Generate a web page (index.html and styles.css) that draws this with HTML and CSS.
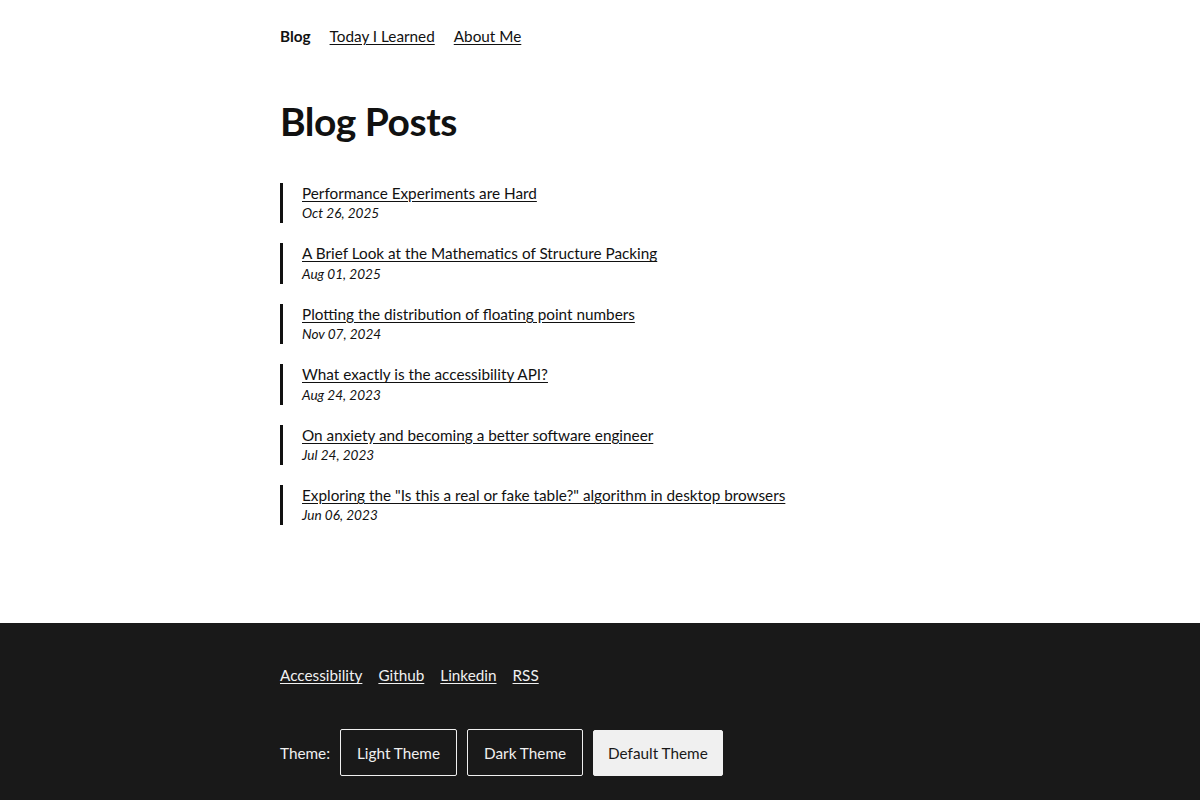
FILE: index.html
```html
<!DOCTYPE html>
<html lang="en">
<head>
<meta charset="utf-8">
<title>Blog Posts</title>
<link rel="stylesheet" href="styles.css">
</head>
<body>
<div class="page">
  <header class="wrap">
    <nav class="nav">
      <a class="nav-link current" href="#">Blog</a>
      <a class="nav-link" href="#">Today I Learned</a>
      <a class="nav-link" href="#">About Me</a>
    </nav>
  </header>
  <main class="wrap main">
    <h1 class="title">Blog Posts</h1>
    <ul class="posts">
      <li class="post"><a href="#">Performance Experiments are Hard</a><time>Oct 26, 2025</time></li>
      <li class="post"><a href="#">A Brief Look at the Mathematics of Structure Packing</a><time>Aug 01, 2025</time></li>
      <li class="post"><a href="#">Plotting the distribution of floating point numbers</a><time>Nov 07, 2024</time></li>
      <li class="post"><a href="#">What exactly is the accessibility API?</a><time>Aug 24, 2023</time></li>
      <li class="post"><a href="#">On anxiety and becoming a better software engineer</a><time>Jul 24, 2023</time></li>
      <li class="post"><a href="#">Exploring the "Is this a real or fake table?" algorithm in desktop browsers</a><time>Jun 06, 2023</time></li>
    </ul>
  </main>
  <footer class="footer">
    <div class="wrap">
      <nav class="foot-links">
        <a href="#">Accessibility</a>
        <a href="#">Github</a>
        <a href="#">Linkedin</a>
        <a href="#">RSS</a>
      </nav>
      <div class="theme">
        <span class="theme-label">Theme:</span>
        <button class="btn">Light Theme</button>
        <button class="btn">Dark Theme</button>
        <button class="btn active">Default Theme</button>
      </div>
    </div>
  </footer>
</div>
</body>
</html>
```
FILE: styles.css
```css
* { box-sizing: border-box; }
html, body { margin: 0; padding: 0; }
body {
  font-family: Lato, "Liberation Sans", sans-serif;
  color: #111;
  background: #fff;
  font-size: 15.3px;
}
a { color: inherit; text-underline-offset: 2px; }
.wrap { width: 640px; margin: 0 auto; }
.nav { display: flex; gap: 19px; padding-top: 25px; line-height: 22px; }
.nav-link.current { font-weight: 700; text-decoration: none; }
.main { padding-bottom: 98px; }
.title { font-size: 39px; font-weight: 700; margin: 49px 0 37px; line-height: 50px; letter-spacing: -0.5px; }
.posts { list-style: none; margin: 0; padding: 0; display: flex; flex-direction: column; gap: 20px; }
.post { border-left: 3px solid #111; padding-left: 19px; display: flex; flex-direction: column; line-height: 21.4px; }
.post time { font-size: 13.6px; font-style: italic; line-height: 19px; }
.footer { background: #191919; color: #f0f0f0; padding: 41px 0 40px; min-height: 177px; }
.foot-links { display: flex; gap: 16px; line-height: 22px; }
.theme { display: flex; align-items: center; gap: 10px; margin-top: 43px; }
.btn {
  font-family: inherit; font-size: 15.3px; color: #f0f0f0; background: transparent;
  border: 1px solid #f0f0f0; border-radius: 2px; height: 47px; padding: 0 16px;
}
.btn.active { background: #f0f0f0; color: #191919; border-color: #f0f0f0; height: 46px; padding: 0 14px; }
```
